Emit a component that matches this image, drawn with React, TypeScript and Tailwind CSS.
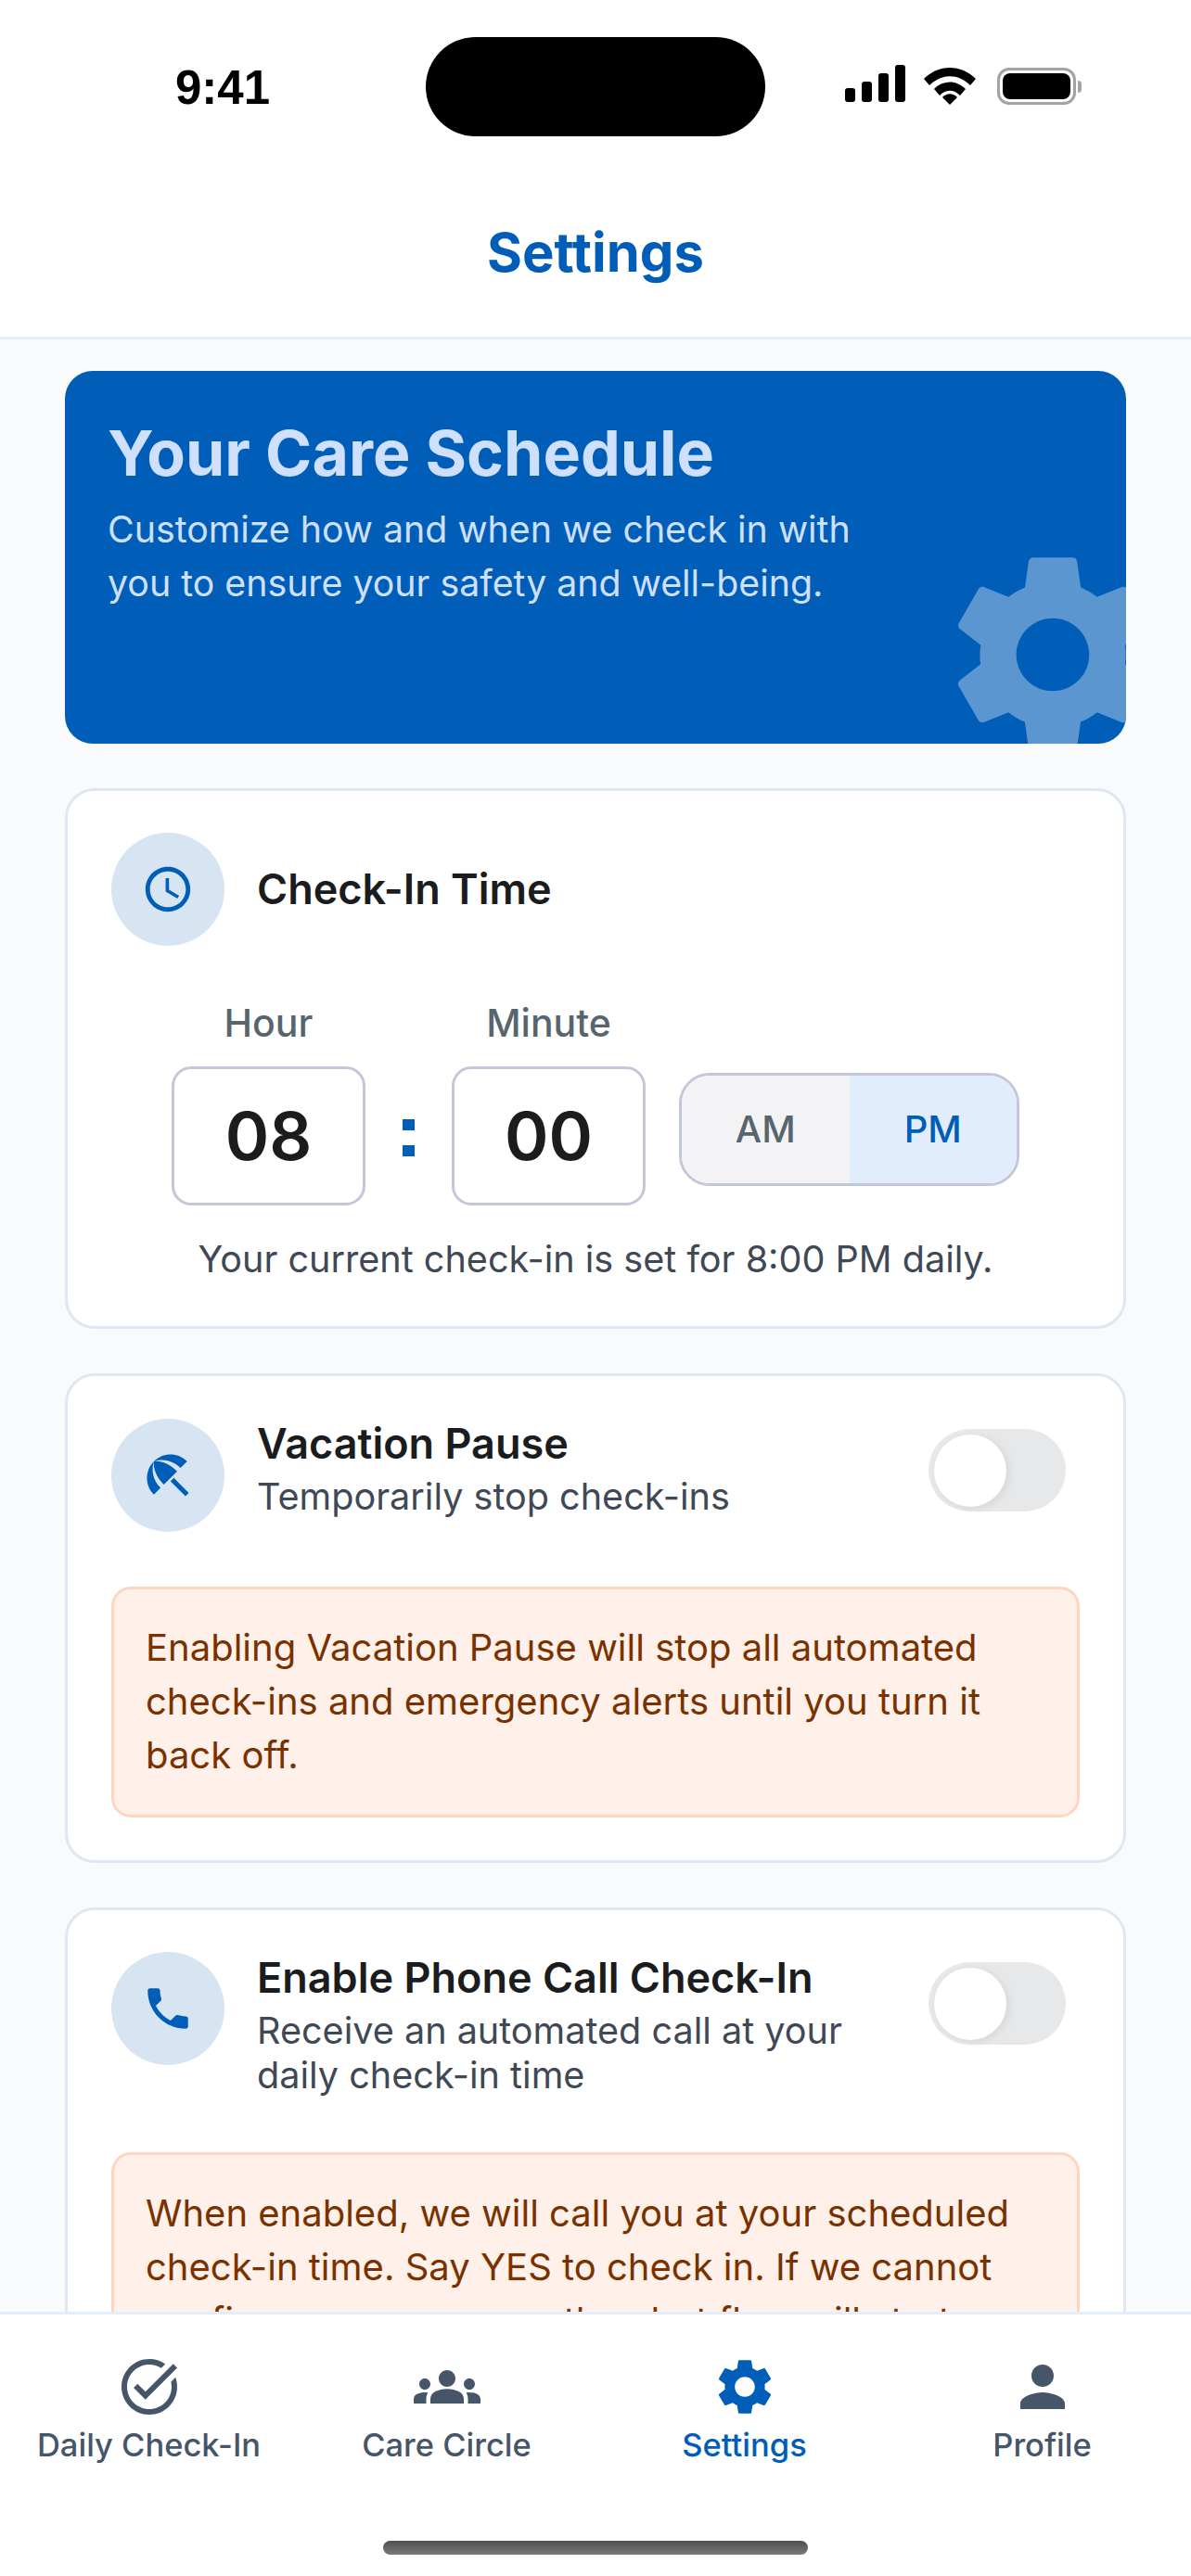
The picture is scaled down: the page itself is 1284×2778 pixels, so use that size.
import React from "react";
import {
  MdAccessTime,
  MdBeachAccess,
  MdGroups,
  MdOutlineTaskAlt,
  MdPerson,
  MdPhone,
  MdSettings,
} from "react-icons/md";

const font = "font-['Inter','Noto_Sans',sans-serif]";

function StatusBar() {
  return (
    <div className="relative h-[190px] shrink-0">
      <span className="absolute left-[189px] top-[65px] text-[51px] leading-[60px] font-semibold text-black font-['Liberation_Sans',sans-serif]">
        9:41
      </span>
      <div className="absolute left-[459px] top-[40px] h-[107px] w-[366px] rounded-full bg-black" />
      <svg className="absolute left-[908px] top-[70px]" width="72" height="44" viewBox="0 0 72 44">
        <rect x="3" y="25" width="11" height="15" rx="3" fill="#000" />
        <rect x="21" y="18" width="11" height="22" rx="3" fill="#000" />
        <rect x="39" y="9" width="11" height="31" rx="3" fill="#000" />
        <rect x="57" y="0" width="11" height="40" rx="3" fill="#000" />
      </svg>
      <svg className="absolute left-[996px] top-[72px]" width="56" height="42" viewBox="0 0 56 42">
        <path d="M0 13 C16 -3 40 -3 56 13 L50 20 C37 7 19 7 6 20 Z" fill="#000" />
        <path d="M11 24 C21 14 35 14 45 24 L39 31 C32 24 24 24 17 31 Z" fill="#000" />
        <path d="M20 33 C25 28 31 28 36 33 L28 41 Z" fill="#000" />
      </svg>
      <div className="absolute left-[1075px] top-[73px] flex items-center">
        <div className="flex h-[40px] w-[85px] items-center justify-center rounded-[13px] border-[3px] border-[#a3a3a3]">
          <div className="h-[28px] w-[73px] rounded-[8px] bg-black" />
        </div>
        <div className="ml-[2px] h-[13px] w-[4px] rounded-r-full bg-[#a3a3a3]" />
      </div>
    </div>
  );
}

function IconCircle({ children }: { children: React.ReactNode }) {
  return (
    <div className="flex h-[122px] w-[122px] shrink-0 items-center justify-center rounded-full bg-[#d6e5f1] text-[#005eb8]">
      {children}
    </div>
  );
}

function Toggle() {
  return (
    <div className="flex h-[89px] w-[148px] shrink-0 items-center rounded-full bg-[#e7e8ea] pl-[6px]">
      <div className="h-[78px] w-[78px] rounded-full bg-white shadow-[3px_2px_8px_rgba(0,0,0,0.08)]" />
    </div>
  );
}

function Alert({ children }: { children: React.ReactNode }) {
  return (
    <div className="rounded-[21px] border-[3px] border-[#ffd5bf] bg-[#fff1ea] px-[34px] pt-[34px] pb-[35px] text-[40px] leading-[58px] text-[#7a3100]">
      {children}
    </div>
  );
}

function TimeBox({ label, value }: { label: string; value: string }) {
  return (
    <div className="flex w-[209px] flex-col items-center">
      <span className="text-[41px] leading-[50px] font-medium text-[#56656f]">{label}</span>
      <div className="mt-[22px] flex h-[150px] w-full items-center justify-center rounded-[21px] border-[3px] border-[#c2c7d9] bg-white text-[72px] font-semibold text-[#1b1c1e]">
        {value}
      </div>
    </div>
  );
}

const navItems = [
  { label: "Daily Check-In", icon: MdOutlineTaskAlt, active: false },
  { label: "Care Circle", icon: MdGroups, active: false },
  { label: "Settings", icon: MdSettings, active: true },
  { label: "Profile", icon: MdPerson, active: false },
];

export default function App() {
  return (
    <div className={`flex h-[2778px] w-[1284px] flex-col overflow-hidden bg-[#f8fafc] ${font}`}>
      <header className="shrink-0 border-b-[3px] border-[#e2eefb] bg-white">
        <StatusBar />
        <h1 className="flex h-[173px] items-start justify-center pt-[49px] text-[58px] leading-[66px] font-bold text-[#005eb8]">
          Settings
        </h1>
      </header>

      <main className="min-h-0 flex-1 overflow-hidden px-[70px] pt-[34px]">
        <section className="relative h-[402px] overflow-hidden rounded-[30px] bg-[#005eb8] px-[46px] pt-[48px]">
          <h2 className="text-[68px] leading-[80px] font-bold text-[#cfe0ff]">Your Care Schedule</h2>
          <p className="mt-[14px] w-[860px] text-[39.3px] leading-[58px] text-[#cfe0ff]">
            Customize how and when we check in with you to ensure your safety and well-being.
          </p>
          <MdSettings className="absolute left-[934px] top-[175px] text-[#5b96d0]" size={262} />
        </section>

        <section className="mt-[48px] rounded-[32px] border-[3px] border-[#e0e7f0] bg-white px-[47px] pt-[45px] pb-[47px]">
          <div className="flex items-center gap-[35px]">
            <IconCircle>
              <MdAccessTime size={58} />
            </IconCircle>
            <h3 className="text-[45px] font-semibold text-[#1b1c1e]">Check-In Time</h3>
          </div>
          <div className="mt-[58px] flex items-end pl-[65px]">
            <TimeBox label="Hour" value="08" />
            <div className="flex h-[150px] w-[93px] flex-col items-center justify-center gap-[16px] pt-[4px]">
              <div className="h-[12px] w-[13px] bg-[#005eb8]" />
              <div className="h-[12px] w-[13px] bg-[#005eb8]" />
            </div>
            <TimeBox label="Minute" value="00" />
            <div className="mb-[21px] ml-[36px] flex h-[122px] w-[367px] overflow-hidden rounded-[33px] border-[3px] border-[#c2c7d9] text-[40px] font-medium">
              <div className="flex flex-1 items-center justify-center bg-[#f3f3f6] text-[#56656f]">AM</div>
              <div className="flex flex-1 items-center justify-center bg-[#e1edfd] text-[#005eb8]">PM</div>
            </div>
          </div>
          <p className="mt-[33px] text-center text-[39.6px] leading-[50px] text-[#3f4855]">
            Your current check-in is set for 8:00 PM daily.
          </p>
        </section>

        <section className="mt-[48px] rounded-[32px] border-[3px] border-[#e0e7f0] bg-white px-[47px] pt-[45px] pb-[46px]">
          <div className="flex items-center gap-[35px]">
            <IconCircle>
              <MdBeachAccess size={60} />
            </IconCircle>
            <div className="min-w-0 flex-1 pb-[14px]">
              <h3 className="text-[45px] leading-[56px] font-semibold text-[#1b1c1e]">Vacation Pause</h3>
              <p className="mt-[5px] text-[39.6px] leading-[48px] text-[#3f4855]">Temporarily stop check-ins</p>
            </div>
            <div className="mr-[15px] mb-[10px]">
              <Toggle />
            </div>
          </div>
          <div className="mt-[59px]">
            <Alert>
              Enabling Vacation Pause will stop all automated check-ins and emergency alerts until you turn it back off.
            </Alert>
          </div>
        </section>

        <section className="mt-[48px] rounded-[32px] border-[3px] border-[#e0e7f0] bg-white px-[47px] pt-[45px] pb-[46px]">
          <div className="flex items-start gap-[35px]">
            <IconCircle>
              <MdPhone size={58} />
            </IconCircle>
            <div className="min-w-0 flex-1">
              <h3 className="text-[45px] leading-[56px] font-semibold text-[#1b1c1e]">Enable Phone Call Check-In</h3>
              <p className="mt-[5px] text-[39.6px] leading-[48px] text-[#3f4855]">
                Receive an automated call at your daily check-in time
              </p>
            </div>
            <div className="mr-[15px] mt-[11px]">
              <Toggle />
            </div>
          </div>
          <div className="mt-[59px]">
            <Alert>
              When enabled, we will call you at your scheduled check-in time. Say YES to check in. If we cannot confirm your response, the alert flow will start.
            </Alert>
          </div>
        </section>
      </main>

      <nav className="h-[285px] shrink-0 border-t-[3px] border-[#e2eefb] bg-white">
        <div className="grid grid-cols-4 pt-[42px]">
          {navItems.map((item) => {
            const Icon = item.icon;
            return (
              <div
                key={item.label}
                className={`flex flex-col items-center ${item.active ? "text-[#005eb8]" : "text-[#475569]"}`}
              >
                <Icon size={72} />
                <span className="mt-[5px] text-[34.5px] leading-[44px] font-medium">{item.label}</span>
              </div>
            );
          })}
        </div>
        <div className="mx-auto mt-[81px] h-[15px] w-[458px] rounded-full bg-linear-to-b from-[#4f4f4f] to-[#7a7a7a]" />
      </nav>
    </div>
  );
}
